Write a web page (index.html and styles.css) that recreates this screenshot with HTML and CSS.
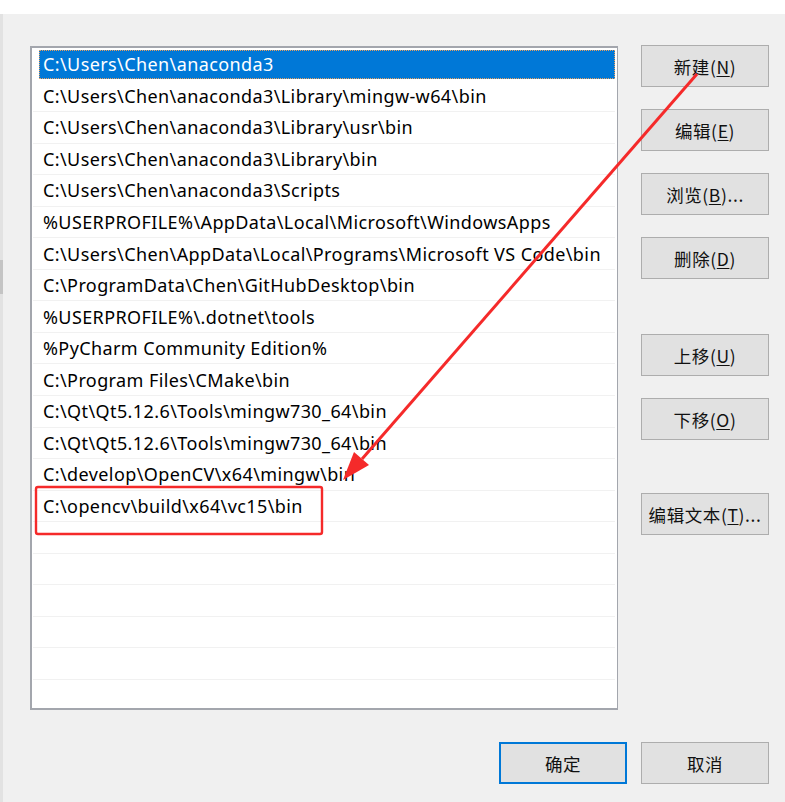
FILE: index.html
```html
<!DOCTYPE html>
<html lang="zh-CN">
<head>
<meta charset="utf-8">
<title>编辑环境变量</title>
<link rel="stylesheet" href="styles.css">
</head>
<body>
<div class="topbar"></div>
<div class="edge"><div class="edge-thumb"></div></div>
<div class="dialog">
  <div class="main">
    <div class="list">
      <div class="row selected"><span class="sel">C:\Users\Chen\anaconda3</span></div>
      <div class="row"><span class="txt">C:\Users\Chen\anaconda3\Library\mingw-w64\bin</span></div>
      <div class="row"><span class="txt">C:\Users\Chen\anaconda3\Library\usr\bin</span></div>
      <div class="row"><span class="txt">C:\Users\Chen\anaconda3\Library\bin</span></div>
      <div class="row"><span class="txt">C:\Users\Chen\anaconda3\Scripts</span></div>
      <div class="row"><span class="txt">%USERPROFILE%\AppData\Local\Microsoft\WindowsApps</span></div>
      <div class="row"><span class="txt">C:\Users\Chen\AppData\Local\Programs\Microsoft VS Code\bin</span></div>
      <div class="row"><span class="txt">C:\ProgramData\Chen\GitHubDesktop\bin</span></div>
      <div class="row"><span class="txt">%USERPROFILE%\.dotnet\tools</span></div>
      <div class="row"><span class="txt">%PyCharm Community Edition%</span></div>
      <div class="row"><span class="txt">C:\Program Files\CMake\bin</span></div>
      <div class="row"><span class="txt">C:\Qt\Qt5.12.6\Tools\mingw730_64\bin</span></div>
      <div class="row"><span class="txt">C:\Qt\Qt5.12.6\Tools\mingw730_64\bin</span></div>
      <div class="row"><span class="txt">C:\develop\OpenCV\x64\mingw\bin</span></div>
      <div class="row"><span class="txt">C:\opencv\build\x64\vc15\bin</span></div>
      <div class="row"></div>
      <div class="row"></div>
      <div class="row"></div>
      <div class="row"></div>
      <div class="row"></div>
      <div class="row"></div>
      <div class="row"></div>
    </div>
    <div class="buttons">
      <button class="btn">新建(<u>N</u>)</button>
      <button class="btn gap-s">编辑(<u>E</u>)</button>
      <button class="btn gap-s">浏览(<u>B</u>)...</button>
      <button class="btn gap-s">删除(<u>D</u>)</button>
      <button class="btn gap-l">上移(<u>U</u>)</button>
      <button class="btn gap-s">下移(<u>O</u>)</button>
      <button class="btn gap-l2">编辑文本(<u>T</u>)...</button>
    </div>
  </div>
  <div class="footer">
    <button class="btn primary">确定</button>
    <button class="btn">取消</button>
  </div>
</div>
<svg class="annot" width="785" height="802" viewBox="0 0 785 802">
  <rect x="36" y="487" width="286" height="47" rx="2" fill="none" stroke="#f52a2a" stroke-width="2.4"/>
  <line x1="697" y1="74" x2="362" y2="459" stroke="#f52a2a" stroke-width="3"/>
  <polygon points="343,480 354,452 369,465" fill="#f52a2a"/>
</svg>
</body>
</html>
```

FILE: styles.css
```css
* { box-sizing: border-box; }
html, body {
  margin: 0;
  padding: 0;
  width: 785px;
  height: 802px;
  overflow: hidden;
  background: #f0f0f0;
  font-family: "Noto Sans", "Noto Sans CJK SC", sans-serif;
  color: #000;
}
.topbar {
  height: 14px;
  background: #ffffff;
}
.edge {
  position: absolute;
  left: 0;
  top: 14px;
  width: 3px;
  height: 788px;
  background: #e2e2e2;
}
.edge-thumb {
  margin-top: 246px;
  height: 34px;
  background: #c4c4c4;
}
.dialog {
  padding: 32px 16px 0 30px;
}
.main {
  display: flex;
  align-items: flex-start;
}
.list {
  width: 588px;
  height: 664px;
  background: #fff;
  border: 2px solid #a3a6ad;
  border-right-width: 1px;
  border-bottom-width: 2px;
  padding: 1px 2px 0 1px;
  overflow: hidden;
}
.row {
  height: 31.56px;
  border-bottom: 1.5px solid #f1f1f1;
  display: flex;
  align-items: center;
  font-size: 18px;
  letter-spacing: 0.4px;
  white-space: nowrap;
}
.txt {
  padding-left: 10px;
}
.selected {
  border-bottom-color: #fff;
  padding: 1px 0 1px 6px;
}
.sel {
  display: flex;
  align-items: center;
  width: 100%;
  height: 100%;
  background: #0078d7;
  color: #fff;
  padding-left: 4px;
  outline: 1px dotted #e8a060;
  outline-offset: -1px;
}
.buttons {
  margin-left: 23px;
  margin-top: -1px;
  display: flex;
  flex-direction: column;
}
.btn {
  width: 128px;
  height: 42px;
  background: #e1e1e1;
  border: 1.5px solid #adadad;
  font-family: "Noto Sans CJK SC", "Noto Sans", sans-serif;
  font-size: 17.5px;
  letter-spacing: 0.6px;
  color: #111;
  padding: 0;
  margin: 0;
  display: flex;
  align-items: center;
  justify-content: center;
}
.btn u {
  text-underline-offset: 2px;
}
.gap-s { margin-top: 22px; }
.gap-l { margin-top: 55px; }
.gap-l2 { margin-top: 53px; }
.footer {
  display: flex;
  justify-content: flex-end;
  gap: 14px;
  margin-top: 32px;
}
.primary {
  border: 2px solid #0078d7;
}
.annot {
  position: absolute;
  left: 0;
  top: 0;
  pointer-events: none;
}
```
